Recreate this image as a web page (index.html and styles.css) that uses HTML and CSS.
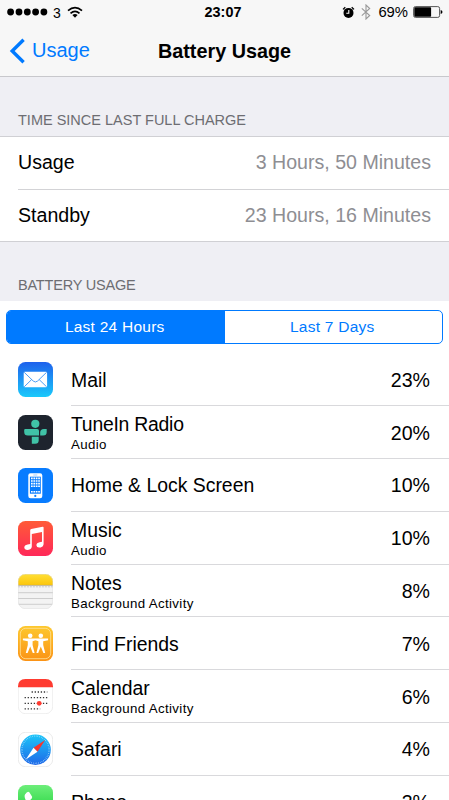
FILE: index.html
```html
<!DOCTYPE html>
<html lang="en">
<head>
<meta charset="UTF-8">
<meta name="viewport" content="width=device-width, initial-scale=1.0">
<title>Battery Usage</title>
<link rel="stylesheet" href="styles.css">
</head>
<body>
<header class="top">
    <div class="status">
        <div class="status-left">
            <svg class="signal" width="42" height="8" viewBox="0 0 42 8"><circle cx="3.6" cy="4" r="3.4"/><circle cx="12" cy="4" r="3.4"/><circle cx="20.3" cy="4" r="3.4"/><circle cx="28.6" cy="4" r="3.4"/><circle cx="36.9" cy="4" r="3.4"/></svg>
            <span class="carrier">3</span>
            <svg class="wifi" width="16" height="12" viewBox="0 0 16 12" fill="none" stroke="#000" stroke-width="1.7"><path d="M1 4.6 Q8 -1.4 15 4.6"/><path d="M3.5 7.3 Q8 3.3 12.5 7.3"/><path d="M8 11.8 L5.4 9.1 Q8 7 10.6 9.1 Z" fill="#000" stroke="none"/></svg>
        </div>
        <span class="clock">23:07</span>
        <div class="status-right">
            <svg width="13" height="13" viewBox="0 0 13 13"><circle cx="6.5" cy="6.9" r="5"/><path d="M1 3.4 L3.3 1.2 M12 3.4 L9.7 1.2" stroke="#000" stroke-width="1.3"/><path d="M6.8 4 V7.2 H4.3" fill="none" stroke="#fff" stroke-width="1.1"/></svg>
            <svg class="bluetooth" width="10" height="16" viewBox="0 0 10 16" fill="none" stroke="#999" stroke-width="1.1"><path d="M.8 4.4 L8.7 11.5 L5 15 V1 L8.7 4.5 L.8 11.6"/></svg>
            <span class="percent">69%</span>
            <svg width="30" height="12" viewBox="0 0 30 12"><rect x=".6" y=".6" width="26" height="10.8" rx="1.8" fill="none" stroke="#555" stroke-width="1"/><rect x="1.3" y="1.3" width="16.8" height="9.4" rx=".8"/><path d="M27.7 4 Q29.5 4.3 29.5 6 T27.7 8 Z"/></svg>
        </div>
    </div>
    <nav class="nav">
        <a class="back">
            <svg width="16" height="26" viewBox="0 0 16 26" fill="none" stroke="#007aff" stroke-width="3.4"><path d="M14.6 1.8 L3.2 13 L14.6 24.2"/></svg>
            <span>Usage</span>
        </a>
        <h1>Battery Usage</h1>
    </nav>
</header>

<h2 class="section-title">TIME SINCE LAST FULL CHARGE</h2>
<section class="times">
    <div class="time"><span>Usage</span><span class="value">3 Hours, 50 Minutes</span></div>
    <div class="time"><span>Standby</span><span class="value">23 Hours, 16 Minutes</span></div>
</section>

<h2 class="section-title short">BATTERY USAGE</h2>
<section class="apps">
    <div class="segmented">
        <span class="segment active">Last 24 Hours</span>
        <span class="segment">Last 7 Days</span>
    </div>

    <div class="app">
        <svg class="icon" viewBox="0 0 35 35">
            <defs><linearGradient id="mail" x2="0" y2="1"><stop offset="0" stop-color="#1e61ec"/><stop offset="1" stop-color="#1ac9fb"/></linearGradient></defs>
            <rect width="35" height="35" rx="7.5" fill="url(#mail)"/>
            <rect x="5.7" y="9.8" width="23.4" height="15.4" rx="1.2" fill="#fff"/>
            <path d="M6.2 10.3 L15.2 19 Q17.4 21 19.6 19 L28.6 10.3 M6.2 24.8 L13.7 17.5 M28.6 24.8 L21.1 17.5" fill="none" stroke="#3993f2" stroke-width=".9"/>
        </svg>
        <div class="info"><div class="label"><span class="name">Mail</span></div><span class="share">23%</span></div>
    </div>
    <div class="app">
        <svg class="icon" viewBox="0 0 35 35">
            <rect width="35" height="35" rx="7.5" fill="#1e242e"/>
            <g fill="#40c3a7"><circle cx="17.3" cy="8.8" r="4.1"/><path d="M7.3 14 H19.2 Q21 14 21 15.8 V20.5 H9.8 Q6.2 20.5 6.2 17 V15 Q6.2 14 7.3 14 Z"/><path d="M22.2 20.5 V17.5 Q22.2 14 25.8 14 H28.7 V17 Q28.7 20.5 25.2 20.5 Z"/><path d="M13.8 21.8 H20.7 V25.3 Q20.7 28.8 17.2 28.8 H13.8 Z"/></g>
        </svg>
        <div class="info"><div class="label"><span class="name tight">TuneIn Radio</span><span class="detail">Audio</span></div><span class="share">20%</span></div>
    </div>
    <div class="app">
        <svg class="icon" viewBox="0 0 35 35">
            <rect width="35" height="35" rx="7.5" fill="#087cff"/>
            <rect x="10.3" y="5.2" width="14" height="25" rx="2.2" fill="#fff"/>
            <rect x="11.9" y="8.7" width="10.9" height="17" fill="#087cff"/>
            <path d="M13 10.4 H22 M13 13 H22 M13 15.6 H22 M13 18.2 H22 M13 23.8 H22" stroke="#fff" stroke-width="1.6" stroke-dasharray="1.7 .7"/>
            <path d="M15.3 7 H19.3" stroke="#7bb9ff" stroke-width=".7"/><circle cx="17.3" cy="27.9" r="1.1" fill="#087cff"/>
        </svg>
        <div class="info"><div class="label"><span class="name">Home &amp; Lock Screen</span></div><span class="share">10%</span></div>
    </div>
    <div class="app">
        <svg class="icon" viewBox="0 0 35 35">
            <defs><linearGradient id="music" x2="0" y2="1"><stop offset="0" stop-color="#ff5b37"/><stop offset="1" stop-color="#ff2859"/></linearGradient></defs>
            <rect width="35" height="35" rx="7.5" fill="url(#music)"/>
            <path d="M12.2 9.1 Q12.2 8.1 13.2 7.9 L24.6 5.7 Q25.6 5.5 25.6 6.5 V23.2 Q25.6 25.6 22.7 26.4 Q18.6 27.2 18.4 24.3 Q18.4 21.8 21.6 21.2 L24 20.7 V11.1 L13.8 13.1 V25.6 Q13.8 28 10.8 28.8 Q6.5 29.4 6.3 26.6 Q6.3 24.2 9.6 23.5 L12.2 23 Z" fill="#fff"/>
        </svg>
        <div class="info"><div class="label"><span class="name">Music</span><span class="detail">Audio</span></div><span class="share">10%</span></div>
    </div>
    <div class="app">
        <svg class="icon" viewBox="0 0 35 35">
            <defs><linearGradient id="notes" x2="0" y2="1"><stop offset="0" stop-color="#ffdf35"/><stop offset="1" stop-color="#fcc60b"/></linearGradient><clipPath id="round"><rect width="35" height="35" rx="7.5"/></clipPath></defs>
            <g clip-path="url(#round)"><rect width="35" height="35" fill="#f3f3f3"/><rect width="35" height="11" fill="url(#notes)"/><path d="M0 11.4 H35" stroke="#b5a477" stroke-width=".8"/><path d="M0 12.8 H35" stroke="#aaa" stroke-width="1" stroke-dasharray=".6 .9"/><path d="M0 18.7 H35 M0 24.5 H35 M0 30.3 H35" stroke="#c3c3c3" stroke-width=".8"/></g>
            <rect x=".3" y=".3" width="34.4" height="34.4" rx="7.2" fill="none" stroke="#dcdcdc" stroke-width=".5"/>
        </svg>
        <div class="info"><div class="label"><span class="name">Notes</span><span class="detail">Background Activity</span></div><span class="share">8%</span></div>
    </div>
    <div class="app">
        <svg class="icon" viewBox="0 0 35 35">
            <defs><linearGradient id="friends" x2="0" y2="1"><stop offset="0" stop-color="#fdc82e"/><stop offset="1" stop-color="#fb9315"/></linearGradient></defs>
            <rect width="35" height="35" rx="7.5" fill="url(#friends)"/><rect x="2.3" y="2.3" width="30.4" height="30.4" rx="5.5" fill="none" stroke="#ffe29a" stroke-width=".8"/>
            <g fill="#fff"><circle cx="12.2" cy="9.7" r="2.3"/><circle cx="22.8" cy="9.7" r="2.3"/><path d="M4.9 12.6 H30.1 V14.2 L25.2 15.2 V19 L27.2 27 H25.4 L22.8 20.5 L20.2 27 H18.4 L20.4 19 V15.2 L17.5 14.3 L14.6 15.2 V19 L16.6 27 H14.8 L12.2 20.5 L9.6 27 H7.8 L9.8 19 V15.2 L4.9 14.2 Z"/></g>
        </svg>
        <div class="info"><div class="label"><span class="name">Find Friends</span></div><span class="share">7%</span></div>
    </div>
    <div class="app">
        <svg class="icon" viewBox="0 0 35 35">
            <g clip-path="url(#round)"><rect width="35" height="35" fill="#fff"/></g>
            <rect x=".3" y=".3" width="34.4" height="34.4" rx="7.2" fill="none" stroke="#ddd" stroke-width=".5"/><path d="M0 8.2 V7.5 Q0 0 7.5 0 H27.5 Q35 0 35 7.5 V8.2 Z" fill="#ff3b30"/>
            <path d="M13.6 13 H29.3 M6.6 18.7 H29.3 M6.6 24.3 H29.3 M6.6 29.9 H22.2" stroke="#333" stroke-width="1.3" stroke-dasharray="1.3 1.75"/>
            <circle cx="21.2" cy="24.3" r="2.4" fill="#ff3b30"/>
        </svg>
        <div class="info"><div class="label"><span class="name">Calendar</span><span class="detail">Background Activity</span></div><span class="share">6%</span></div>
    </div>
    <div class="app">
        <svg class="icon" viewBox="0 0 35 35">
            <defs><linearGradient id="safari" x2="0" y2="1"><stop offset="0" stop-color="#1bc6f9"/><stop offset="1" stop-color="#1f68e8"/></linearGradient></defs>
            <rect x=".3" y=".3" width="34.4" height="34.4" rx="7.2" fill="#fff" stroke="#ddd" stroke-width=".6"/>
            <circle cx="17.5" cy="17.7" r="15.3" fill="url(#safari)"/><circle cx="17.5" cy="17.7" r="13.6" fill="none" stroke="#b9e2ff" stroke-width="1.3" stroke-dasharray=".5 1.28"/>
            <path d="M27.2 7.9 L15.5 15.7 L19.5 19.7 Z" fill="#f5352e"/><path d="M7.8 27.5 L15.5 15.7 L19.5 19.7 Z" fill="#fff"/>
        </svg>
        <div class="info"><div class="label"><span class="name">Safari</span></div><span class="share">4%</span></div>
    </div>
    <div class="app">
        <svg class="icon" viewBox="0 0 35 35">
            <defs><linearGradient id="phone" x2="0" y2="1"><stop offset="0" stop-color="#6dee7a"/><stop offset="1" stop-color="#12cc2f"/></linearGradient></defs>
            <rect width="35" height="35" rx="7.5" fill="url(#phone)"/>
            <path d="M7 9.5 Q9.5 5.6 11.3 7.2 L14 11.5 Q14.6 13 12.6 14.5 Q12 16 15 19.5 Q18.5 23 20.3 22.4 Q22 20 23.5 21 L27.7 23.7 Q29.3 25.3 25.5 28 Q21 30 13 22 Q5 13.5 7 9.5 Z" fill="#fff"/>
        </svg>
        <div class="info"><div class="label"><span class="name">Phone</span></div><span class="share">3%</span></div>
    </div>
</section>
</body>
</html>
```

FILE: styles.css
```css
* {
    box-sizing: border-box;
}
body {
    margin: 0;
    height: 800px;
    overflow: hidden;
    background: #efeff4;
    color: #000;
    font-family: "Liberation Sans", Arial, sans-serif;
    font-size: 19.6px;
}
svg {
    display: block;
    flex-shrink: 0;
}
.top {
    height: 77px;
    background: #f7f7f7;
    border-bottom: 1px solid #c8c8cc;
}
.status {
    display: grid;
    grid-template-columns: 1fr auto 1fr;
    align-items: center;
    height: 24px;
    padding: 0 6px 0 7px;
    font-size: 14px;
}
.status-left, .status-right {
    display: flex;
    align-items: center;
}
.status-right {
    justify-content: flex-end;
}
.carrier {
    margin: 1px 6px 0 4px;
}
.clock {
    padding: 0 4px 0 0;
    font-weight: bold;
    font-size: 14.4px;
}
.bluetooth {
    margin: 0 7px 0 6px;
}
.percent {
    margin-right: 5px;
    font-size: 14.8px;
}
.nav {
    display: grid;
    grid-template-columns: 1fr auto 1fr;
    align-items: center;
    height: 53px;
    padding: 0 9px;
}
.back {
    display: flex;
    align-items: center;
    gap: 7px;
    color: #007aff;
    font-size: 20px;
}
.nav h1 {
    margin: 0;
    padding-top: 1px;
    font-size: 19.8px;
    font-weight: bold;
}
.section-title {
    height: 59px;
    margin: 0;
    padding: 35px 0 0 18px;
    color: #6d6d72;
    font-size: 14.5px;
    font-weight: normal;
    line-height: 17px;
}
.short {
    letter-spacing: -.2px;
}
.times {
    height: 106px;
    padding-left: 18px;
    background: #fff;
    border-top: 1px solid #d0d0d4;
    border-bottom: 1px solid #d0d0d4;
}
.time {
    display: flex;
    align-items: center;
    justify-content: space-between;
    height: 52px;
    padding: 0 18px 1px 0;
}
.time + .time {
    padding-bottom: 0;
    border-top: 1px solid #d3d3d6;
}
.value {
    color: #8e8e93;
}
.apps {
    padding-top: 9px;
    background: #fff;
}
.segmented {
    display: flex;
    height: 34px;
    margin: 0 6px 9.5px;
    border: 1px solid #007aff;
    border-radius: 5px;
    overflow: hidden;
}
.segment {
    display: flex;
    flex: 1;
    align-items: center;
    justify-content: center;
    padding-right: 2px;
    color: #007aff;
    font-size: 15.5px;
    letter-spacing: .25px;
}
.active {
    background: #007aff;
    color: #fff;
}
.app {
    display: flex;
    align-items: center;
    height: 52.8px;
    padding-left: 18px;
}
.icon {
    width: 35px;
    height: 35px;
}
.info {
    display: flex;
    flex: 1;
    align-items: center;
    justify-content: space-between;
    height: 100%;
    margin-left: 18px;
    padding: 2px 19px 0 0;
    border-bottom: 1px solid #d9d9dc;
}
.label {
    display: flex;
    flex-direction: column;
}
.name {
    font-size: 19.4px;
    line-height: 23px;
}
.tight {
    letter-spacing: -.25px;
}
.detail {
    font-size: 13.3px;
    line-height: 17px;
    letter-spacing: .35px;
}
```
